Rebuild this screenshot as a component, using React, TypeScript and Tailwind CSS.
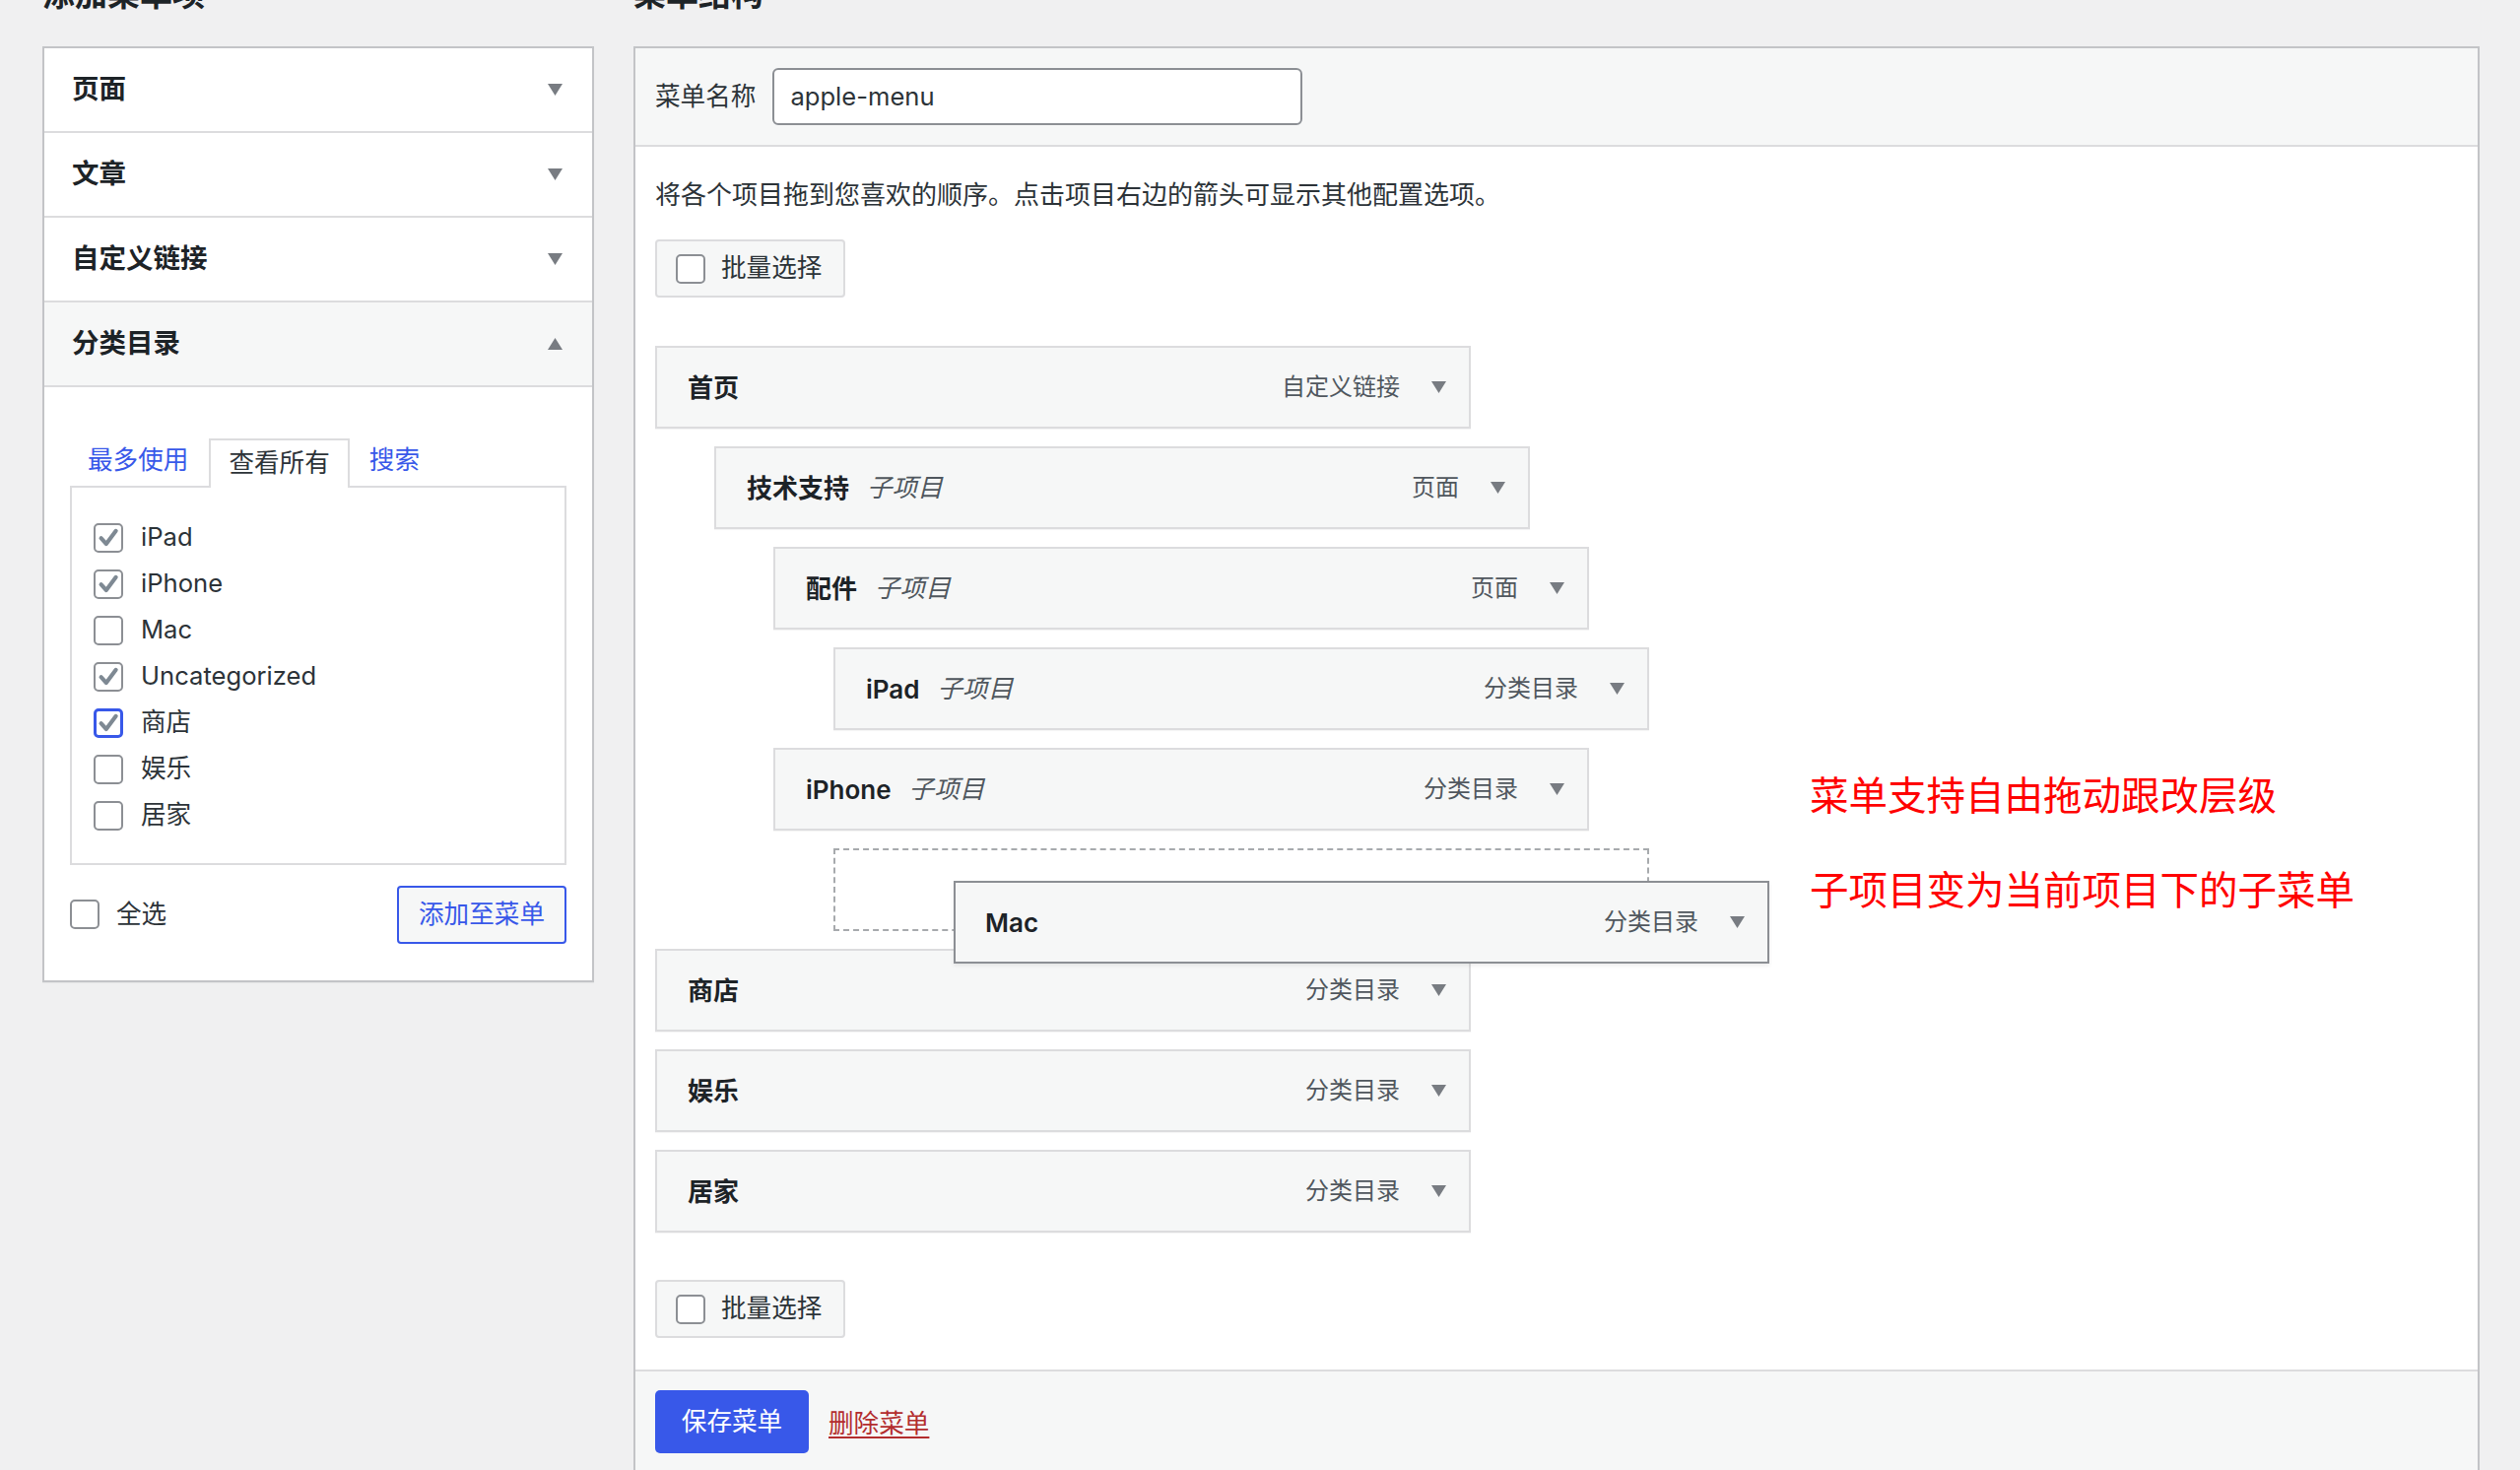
import { ReactNode } from "react"

const Arrow = ({ up = false }: { up?: boolean }) => (
  <svg width="15" height="12" viewBox="0 0 15 12" className="shrink-0">
    <polygon points={up ? "7.5,0 15,12 0,12" : "0,0 15,0 7.5,12"} fill="#787c82" />
  </svg>
)

const Checkbox = ({ checked = false, focus = false }: { checked?: boolean; focus?: boolean }) => (
  <div
    className={
      focus
        ? "flex h-[30px] w-[30px] shrink-0 items-center justify-center rounded-[5px] border-[3px] border-[#3858e9] bg-white"
        : "flex h-[30px] w-[30px] shrink-0 items-center justify-center rounded-[5px] border-2 border-[#8c8f94] bg-white"
    }
  >
    {checked && (
      <svg viewBox="0 0 20 20" className="h-[24px] w-[24px]">
        <path
          d="M3.8 10.2 L8.2 15 L16.4 4"
          fill="none"
          stroke="#7e8993"
          strokeWidth="3.4"
          strokeLinecap="round"
          strokeLinejoin="round"
        />
      </svg>
    )}
  </div>
)

const sections = ["页面", "文章", "自定义链接"]

const cats = [
  { name: "iPad", checked: true },
  { name: "iPhone", checked: true },
  { name: "Mac", checked: false },
  { name: "Uncategorized", checked: true },
  { name: "商店", checked: true, focus: true },
  { name: "娱乐", checked: false },
  { name: "居家", checked: false },
]

const indent = ["ml-0", "ml-[60px]", "ml-[120px]", "ml-[181px]"]

const ItemBar = ({ title, sub, type }: { title: string; sub?: boolean; type: string }) => (
  <>
    <span className="text-[26px] font-semibold text-[#1d2327]">{title}</span>
    {sub && <span className="ml-[18px] text-[25.6px] italic text-[#50575e]">子项目</span>}
    <span className="ml-auto text-[24px] text-[#50575e]">{type}</span>
    <span className="ml-[32px]">
      <Arrow />
    </span>
  </>
)

const MenuItem = ({
  title,
  sub,
  type,
  level,
}: {
  title: string
  sub?: boolean
  type: string
  level: number
}) => (
  <div
    className={`mt-[18px] flex h-[84px] w-[828px] items-center border-2 border-[#dcdcde] bg-[#f6f7f7] pl-[31px] pr-[23px] shadow-[0_1px_1px_rgba(0,0,0,0.04)] ${indent[level]}`}
  >
    <ItemBar title={title} sub={sub} type={type} />
  </div>
)

const BulkSelect = () => (
  <div className="flex h-[59px] w-[193px] items-center rounded-[4px] border-2 border-[#dcdcde] bg-[#f6f7f7] pl-[19px]">
    <Checkbox />
    <span className="ml-[16px] text-[25.6px] text-[#2c3338]">批量选择</span>
  </div>
)

const Heading = ({ children }: { children: ReactNode }) => (
  <h2 className="-mt-[22px] mb-[36px] h-[33px] text-[33px] font-bold leading-[33px] text-[#1d2327]">
    {children}
  </h2>
)

export default function App() {
  return (
    <div className="min-h-screen overflow-hidden bg-[#f0f0f1] font-['Inter','Noto_Sans_CJK_SC',sans-serif] text-[#2c3338]">
      <div className="flex gap-[40px] pl-[43px] pr-[41px]">
        {/* left column */}
        <div className="w-[560px] shrink-0">
          <Heading>添加菜单项</Heading>
          <div className="border-2 border-[#c3c4c7] bg-white shadow-[0_1px_1px_rgba(0,0,0,0.04)]">
            {sections.map((s) => (
              <div
                key={s}
                className="flex h-[86px] items-center justify-between border-b-2 border-[#dcdcde] pl-[28px] pr-[30px]"
              >
                <span className="text-[27.5px] font-bold text-[#1d2327]">{s}</span>
                <Arrow />
              </div>
            ))}
            <div className="flex h-[86px] items-center justify-between border-b-2 border-[#dcdcde] bg-[#f6f7f7] pl-[28px] pr-[30px]">
              <span className="text-[27.5px] font-bold text-[#1d2327]">分类目录</span>
              <Arrow up />
            </div>

            <div className="px-[26px] pb-[37px] pt-[50px]">
              <div className="flex items-end text-[25.6px]">
                <span className="ml-[18px] flex h-[50px] items-center pb-[2px] text-[#3858e9]">最多使用</span>
                <div className="relative z-10 -mb-[2px] ml-[21px] flex h-[50px] items-center border-2 border-b-0 border-[#dcdcde] bg-white px-[18px] pb-[2px] text-[#2c3338]">
                  查看所有
                </div>
                <span className="ml-[20px] flex h-[50px] items-center pb-[2px] text-[#3858e9]">搜索</span>
              </div>
              <div className="h-[385px] border-2 border-[#dcdcde] pl-[22px] pt-[27px]">
                {cats.map((c) => (
                  <div key={c.name} className="flex h-[47px] items-center">
                    <Checkbox checked={c.checked} focus={c.focus} />
                    <span className="ml-[18px] text-[25.6px] text-[#2c3338]">{c.name}</span>
                  </div>
                ))}
              </div>
              <div className="mt-[21px] flex items-center justify-between">
                <div className="flex items-center">
                  <Checkbox />
                  <span className="ml-[17px] text-[25.6px] text-[#2c3338]">全选</span>
                </div>
                <div className="flex h-[59px] w-[172px] items-center justify-center rounded-[4px] border-2 border-[#3858e9] bg-[#f6f7f7] text-[25.6px] text-[#3858e9]">
                  添加至菜单
                </div>
              </div>
            </div>
          </div>
        </div>

        {/* right column */}
        <div className="min-w-0 flex-1">
          <Heading>菜单结构</Heading>
          <div className="border-2 border-b-0 border-[#c3c4c7] bg-white">
            <div className="flex h-[100px] items-center border-b-2 border-[#dcdcde] bg-[#f6f7f7] pl-[20px]">
              <span className="text-[25.6px] text-[#2c3338]">菜单名称</span>
              <div className="ml-[17px] flex h-[58px] w-[538px] items-center rounded-[6px] border-2 border-[#8c8f94] bg-white pl-[16px] text-[25.6px] text-[#2c3338]">
                apple-menu
              </div>
            </div>

            <div className="pb-[32px] pl-[20px] pt-[30px]">
              <p className="text-[26px] leading-[38px] text-[#2c3338]">
                将各个项目拖到您喜欢的顺序。点击项目右边的箭头可显示其他配置选项。
              </p>
              <div className="mt-[26px]">
                <BulkSelect />
              </div>

              <div className="mt-[31px] flex">
                <div className="w-[1010px] shrink-0">
                  <MenuItem title="首页" type="自定义链接" level={0} />
                  <MenuItem title="技术支持" sub type="页面" level={1} />
                  <MenuItem title="配件" sub type="页面" level={2} />
                  <MenuItem title="iPad" sub type="分类目录" level={3} />
                  <MenuItem title="iPhone" sub type="分类目录" level={2} />
                  {/* drop placeholder with the item being dragged */}
                  <div className="relative ml-[181px] mt-[18px] h-[84px] w-[828px] border-2 border-dashed border-[#a7aaad]">
                    <div className="absolute left-[120px] top-[31px] z-20 flex h-[84px] w-[828px] items-center border-2 border-[#8c8f94] bg-[#f6f7f7] pl-[30px] pr-[23px] shadow-[0_2px_4px_rgba(0,0,0,0.08)]">
                      <ItemBar title="Mac" type="分类目录" />
                    </div>
                  </div>
                  <MenuItem title="商店" type="分类目录" level={0} />
                  <MenuItem title="娱乐" type="分类目录" level={0} />
                  <MenuItem title="居家" type="分类目录" level={0} />
                </div>
                <div className="ml-[162px] pt-[452px] font-['Noto_Sans_CJK_SC',sans-serif] text-[39.5px] leading-[40px] text-[#ff0000]">
                  <div>菜单支持自由拖动跟改层级</div>
                  <div className="mt-[56px]">子项目变为当前项目下的子菜单</div>
                </div>
              </div>

              <div className="mt-[48px]">
                <BulkSelect />
              </div>
            </div>

            <div className="flex h-[140px] items-start border-t-2 border-[#dcdcde] bg-[#f6f7f7] pl-[20px] pt-[19px]">
              <div className="flex h-[64px] w-[156px] items-center justify-center rounded-[5px] bg-[#3858e9] text-[25.6px] text-white">
                保存菜单
              </div>
              <span className="ml-[20px] mt-[15px] text-[25.6px] text-[#b32d2e] underline underline-offset-[4px]">
                删除菜单
              </span>
            </div>
          </div>
        </div>
      </div>
    </div>
  )
}
